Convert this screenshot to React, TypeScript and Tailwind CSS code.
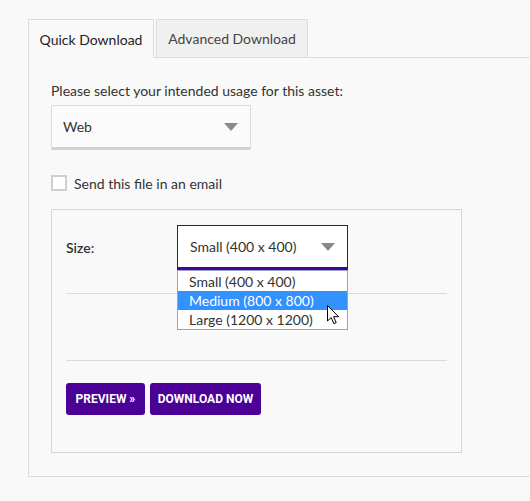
import React from "react";

const Arrow = ({ className = "" }: { className?: string }) => (
  <svg width="14" height="8" viewBox="0 0 14 8" className={className}>
    <polygon points="0,0 14,0 7,8" fill="#8a8a8a" />
  </svg>
);

const Cursor = () => (
  <svg width="13" height="20" viewBox="0 0 13 20" className="absolute left-[149px] top-[34px]">
    <path d="M0.5 0.5 L0.5 16 L4.2 12.6 L6.8 18.6 L9.2 17.6 L6.6 11.7 L11.6 11.7 Z" fill="#ffffff" stroke="#000000" strokeWidth="1" strokeLinejoin="round" />
  </svg>
);

export default function App() {
  return (
    <div className="w-[530px] h-[501px] bg-[#f9f9f9] pl-[28px] pt-[19px] overflow-hidden text-[#333] text-[14px]" style={{ fontFamily: "Lato, 'Noto Sans', sans-serif" }}>
      <div className="flex items-end">
        <div className="relative z-10 w-[126px] h-[39px] flex items-center justify-center border border-b-0 border-[#dcdcdc] bg-[#f9f9f9] text-[#222] mb-[-1px]">
          Quick Download
        </div>
        <div className="ml-[2px] w-[152px] h-[38px] flex items-center justify-center border border-b-0 border-[#dcdcdc] bg-[#f0f0f0] text-[#444]">
          Advanced Download
        </div>
      </div>
      <div className="border-l border-t border-b border-[#dcdcdc] pl-[22px] pt-[23px] pb-[23px]">
        <div className="leading-[20px]">Please select your intended usage for this asset:</div>
        <div className="mt-[4px] w-[200px] h-[45px] border border-[#dcdcdc] border-b-[3px] border-b-[#d2d2d2] bg-[#fbfbfb] flex items-center justify-between pl-[11px] pr-[12px]">
          <span>Web</span>
          <Arrow />
        </div>
        <div className="mt-[25px] flex items-center gap-[7px] h-[16px]">
          <div className="w-[16px] h-[16px] border-2 border-[#cfcfcf] bg-white" />
          <span>Send this file in an email</span>
        </div>
        <div className="mt-[18px] w-[411px] border border-[#d6d6d6] px-[14px] pt-[15px] pb-[37px]">
          <div className="flex items-center">
            <div className="w-[111px] font-semibold text-[#333]">Size:</div>
            <div className="relative">
              <div className="w-[171px] h-[45px] border border-[#4b0096] border-b-[3px] bg-white flex items-center justify-between pl-[12px] pr-[12px]">
                <span>Small (400 x 400)</span>
                <Arrow />
              </div>
              <div className="absolute left-0 top-[45px] z-10 w-[171px] border border-[#8fa6c8] bg-white py-[1px] leading-[19px]">
                <div className="pl-[11px] h-[19px]">Small (400 x 400)</div>
                <div className="pl-[11px] h-[19px] bg-[#3390ff] text-white">Medium (800 x 800)</div>
                <div className="pl-[11px] h-[18px]">Large (1200 x 1200)</div>
                <Cursor />
              </div>
            </div>
          </div>
          <div className="mt-[23px] border-t border-[#dadada]" />
          <div className="mt-[66px] border-t border-[#dadada]" />
          <div className="mt-[22px] flex gap-[5px]" style={{ fontFamily: "Roboto, sans-serif" }}>
            <button className="w-[79px] h-[32px] rounded-[3px] bg-[#4b0096] text-white text-[12px] font-bold uppercase">Preview »</button>
            <button className="w-[111px] h-[32px] rounded-[3px] bg-[#4b0096] text-white text-[12px] font-bold uppercase">Download Now</button>
          </div>
        </div>
      </div>
    </div>
  );
}
